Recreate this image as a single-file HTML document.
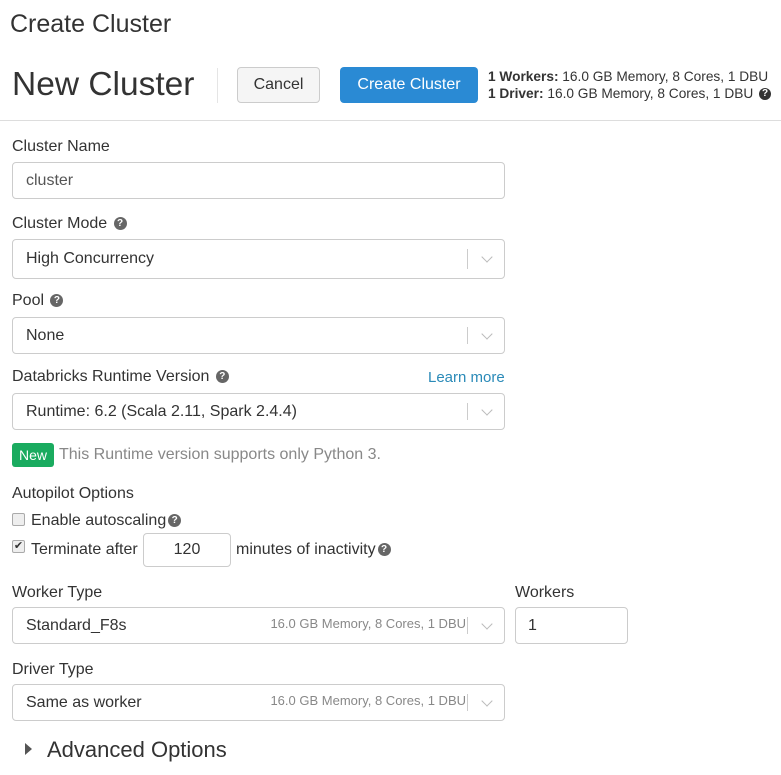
<!DOCTYPE html>
<html><head><style>
*{box-sizing:border-box;margin:0;padding:0}
body{width:781px;height:775px;background:#fff;font-family:"Liberation Sans",sans-serif;color:#333;position:relative;overflow:hidden}
.a{position:absolute;white-space:nowrap}
.lbl{font-size:16px;color:#333}
.box{position:absolute;border:1px solid #ccc;border-radius:4px;background:#fff;font-size:16px;padding-left:13px;display:flex;align-items:center}
.sel .sep{position:absolute;right:36px;top:9px;bottom:9px;border-left:1px solid #ccc}
.sel .chev{position:absolute;right:13px;top:50%;width:8px;height:8px;border-right:1.5px solid #bbb;border-bottom:1.5px solid #bbb;transform:translateY(-75%) rotate(45deg)}
.q{display:inline-block;width:13px;height:13px;border-radius:50%;background:#666;color:#fff;font-size:10px;font-weight:bold;text-align:center;line-height:13px;vertical-align:middle;margin-left:2px}
.sm{position:absolute;right:38px;font-size:13px;color:#888}
.cb{position:absolute;width:13px;height:13px;border:1px solid #aaa;border-radius:2px;background:#eee}
</style></head><body>
<div class="a" style="left:10px;top:10px;font-size:25px;color:#333">Create Cluster</div>
<div class="a" style="left:12px;top:66px;font-size:33.5px;color:#333">New Cluster</div>
<div class="a" style="left:217px;top:68px;height:35px;border-left:1px solid #e5e5e5"></div>
<div class="a" style="left:237px;top:67px;width:83px;height:36px;border:1px solid #ccc;border-radius:4px;background:#f5f5f5;font-size:16px;text-align:center;line-height:34px">Cancel</div>
<div class="a" style="left:340px;top:67px;width:138px;height:36px;border-radius:4px;background:#2a8ad4;color:#fff;font-size:16px;text-align:center;line-height:36px">Create Cluster</div>
<div class="a" style="left:488px;top:68px;font-size:13.7px;line-height:17px"><b>1 Workers:</b> 16.0 GB Memory, 8 Cores, 1 DBU<br><b>1 Driver:</b> 16.0 GB Memory, 8 Cores, 1 DBU <span class="q" style="background:#333;width:12px;height:12px;line-height:12px">?</span></div>
<div class="a" style="left:0;top:120px;width:781px;border-top:1px solid #ddd"></div>

<div class="a lbl" style="left:12px;top:138px">Cluster Name</div>
<div class="box" style="left:12px;top:162px;width:493px;height:37px;color:#555">cluster</div>

<div class="a lbl" style="left:12px;top:215px">Cluster Mode <span class="q">?</span></div>
<div class="box sel" style="left:12px;top:239px;width:493px;height:40px">High Concurrency<span class="sep"></span><span class="chev"></span></div>

<div class="a lbl" style="left:12px;top:292px">Pool <span class="q">?</span></div>
<div class="box sel" style="left:12px;top:317px;width:493px;height:37px">None<span class="sep"></span><span class="chev"></span></div>

<div class="a lbl" style="left:12px;top:368px">Databricks Runtime Version <span class="q">?</span></div>
<div class="a" style="left:428px;top:369px;font-size:15px;color:#2a8ab8">Learn more</div>
<div class="box sel" style="left:12px;top:393px;width:493px;height:37px">Runtime: 6.2 (Scala 2.11, Spark 2.4.4)<span class="sep"></span><span class="chev"></span></div>

<div class="a" style="left:12px;top:443px;width:42px;height:24px;background:#1aab5f;border-radius:3px;color:#fff;font-size:14px;text-align:center;line-height:24px">New</div>
<div class="a" style="left:59px;top:446px;font-size:16px;color:#888">This Runtime version supports only Python 3.</div>

<div class="a lbl" style="left:12px;top:485px">Autopilot Options</div>
<div class="cb" style="left:12px;top:513px"></div>
<div class="a lbl" style="left:31px;top:512px">Enable autoscaling<span class="q">?</span></div>
<div class="cb" style="left:12px;top:540px;font-size:11px;line-height:11px;text-align:center">✔</div>
<div class="a lbl" style="left:31px;top:541px">Terminate after</div>
<div class="box" style="left:143px;top:533px;width:88px;height:34px;justify-content:center;padding:0">120</div>
<div class="a lbl" style="left:236px;top:541px">minutes of inactivity<span class="q">?</span></div>

<div class="a lbl" style="left:12px;top:584px">Worker Type</div>
<div class="a lbl" style="left:515px;top:584px">Workers</div>
<div class="box sel" style="left:12px;top:607px;width:493px;height:37px">Standard_F8s<span class="sm" style="top:8px">16.0 GB Memory, 8 Cores, 1 DBU</span><span class="sep"></span><span class="chev"></span></div>
<div class="box" style="left:515px;top:607px;width:113px;height:37px;padding-left:12px">1</div>

<div class="a lbl" style="left:12px;top:661px">Driver Type</div>
<div class="box sel" style="left:12px;top:684px;width:493px;height:37px">Same as worker<span class="sm" style="top:8px">16.0 GB Memory, 8 Cores, 1 DBU</span><span class="sep"></span><span class="chev"></span></div>

<div class="a" style="left:25px;top:743px;width:0;height:0;border-left:7px solid #555;border-top:6px solid transparent;border-bottom:6px solid transparent"></div>
<div class="a" style="left:47px;top:737px;font-size:22px;color:#333">Advanced Options</div>
</body></html>
